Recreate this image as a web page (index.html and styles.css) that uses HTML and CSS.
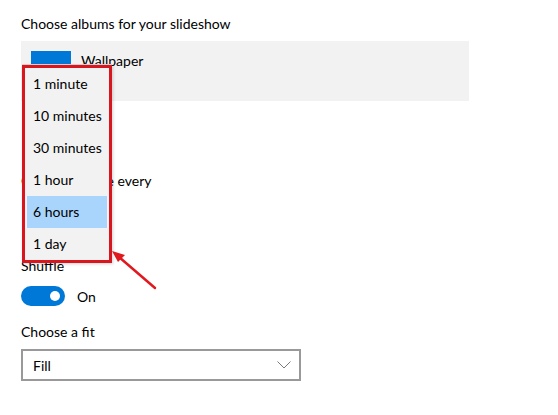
FILE: index.html
```html
<!DOCTYPE html>
<html lang="en">
<head>
  <meta charset="UTF-8">
  <title>Slideshow settings</title>
  <link rel="stylesheet" href="styles.css">
</head>
<body>

  <main class="settings">
    <p class="label">Choose albums for your slideshow</p>
    <div class="album">
      <span class="thumb"></span>
      <span class="album-name">Wallpaper</span>
    </div>

    <p class="label every">Change picture every</p>

    <p class="label shuffle">Shuffle</p>
    <div class="toggle-row">
      <span class="toggle"><span class="knob"></span></span>
      <span class="toggle-text">On</span>
    </div>

    <p class="label fit">Choose a fit</p>
    <div class="select">
      <span>Fill</span>
      <svg class="chevron" width="14" height="8" viewBox="0 0 14 8"><polyline points="0.5,0.5 7,7 13.5,0.5" fill="none" stroke="#7a7a7a" stroke-width="1"/></svg>
    </div>
  </main>

  <ul class="menu">
    <li>1 minute</li>
    <li>10 minutes</li>
    <li>30 minutes</li>
    <li>1 hour</li>
    <li class="selected">6 hours</li>
    <li>1 day</li>
  </ul>

  <svg class="arrow" width="558" height="415" viewBox="0 0 558 415">
    <line x1="155" y1="288" x2="119" y2="257" stroke="#e0191f" stroke-width="2.5" stroke-linecap="round"/>
    <polygon points="112,251 125,255 118,262" fill="#e0191f"/>
  </svg>

</body>
</html>
```

FILE: styles.css
```css
* { margin: 0; padding: 0; box-sizing: border-box; }
body { background: #fff; color: #000; font-family: 'Lato', sans-serif; font-size: 14px; position: relative; width: 558px; height: 415px; overflow: hidden; white-space: nowrap; }

.settings { padding: 14px 0 0 21px; }
.label { line-height: 20px; }

.album {
  width: 448px; height: 60px; margin-top: 7px; background: #f2f2f2;
  display: flex; align-items: flex-start; padding: 10px 0 0 10px; gap: 10px;
}
.thumb { width: 40px; height: 30px; background: #0078d7; }
.album-name { line-height: 20px; }

.every { margin-top: 70px; }
.shuffle { margin-top: 65px; }

.toggle-row { display: flex; align-items: center; gap: 12px; margin-top: 10px; height: 20px; }
.toggle {
  width: 44px; height: 20px; border-radius: 10px; background: #0078d7;
  display: flex; align-items: center; justify-content: flex-end; padding-right: 5px;
}
.knob { width: 10px; height: 10px; border-radius: 50%; background: #fff; }

.fit { margin-top: 16px; }
.select {
  width: 280px; height: 32px; margin-top: 7px; border: 2px solid #999;
  display: flex; align-items: center; justify-content: space-between; padding: 0 8px 0 10px;
}

.menu {
  position: absolute; left: 22px; top: 65px; width: 90px;
  list-style: none; background: #f2f2f2; border: 3px solid #d9161d;
  padding: 0 2px; box-shadow: 1px 1px 3px rgba(0,0,0,0.18), 0 -1px 0 #d6d6d6;
}
.menu li { height: 32px; line-height: 32px; padding-left: 6px; }
.menu li.selected { background: #a9d5fc; }

.arrow { position: absolute; left: 0; top: 0; pointer-events: none; }
```
